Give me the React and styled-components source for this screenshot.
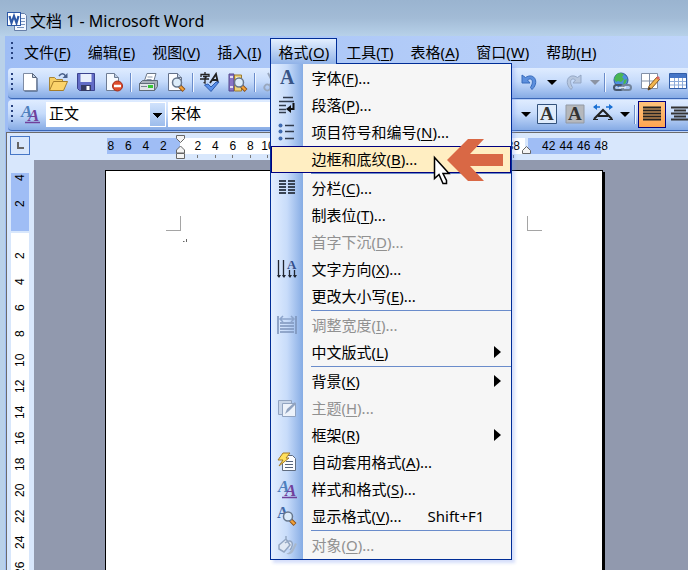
import React from "react";
import styled, { createGlobalStyle, css } from "styled-components";

const GlobalStyle = createGlobalStyle`
    * {
        box-sizing: border-box;
    }
    body {
        margin: 0;
        overflow: hidden;
        font-family: "Noto Sans", "Noto Sans CJK SC", sans-serif;
        font-size: 15px;
        color: #000;
    }
    button, select {
        font: inherit;
        color: inherit;
        border: 0;
        padding: 0;
        margin: 0;
        background: none;
    }
    svg {
        display: block;
        flex: none;
        overflow: visible;
    }
`;

const Window = styled.div`
    display: flex;
    flex-direction: column;
    height: 100vh;
    overflow: hidden;
    background: #b9d1e9;
`;

const TitleBar = styled.header`
    display: flex;
    align-items: center;
    gap: 3px;
    flex: none;
    height: 36px;
    padding: 6px 7px 0;
    background: linear-gradient(#9ab4d0, #a2bbd6 50%, #b7d1e9);
`;

const Title = styled.h1`
    margin: 0;
    font-size: 16px;
    font-weight: 400;
    line-height: 28px;
`;

const Frame = styled.div`
    display: flex;
    flex-direction: column;
    flex: 1;
    min-height: 0;
    margin-left: 5px;
    background: linear-gradient(90deg, #9ebdf5, #bfd5fa);
`;

const MenuBar = styled.nav`
    display: flex;
    align-items: flex-start;
    flex: none;
    height: 32px;
    padding: 2px 0 0 3px;
`;

const Grip = styled.span`
    flex: none;
    width: 2px;
    height: 18px;
    margin: ${props => props.$top || 0}px 3px 0;
    background: repeating-linear-gradient(#27417f 0 2px, transparent 2px 5px);
`;

const MenuSlot = styled.div`
    position: relative;
    z-index: ${props => (props.$open ? 10 : 1)};
    margin-right: 1px;
`;

const MenuButton = styled.button`
    position: relative;
    z-index: 2;
    display: block;
    height: 26px;
    padding: 0 7px;
    border: 1px solid transparent;
    border-bottom: 0;
    line-height: 24px;
    white-space: nowrap;
    ${props =>
        props.$open &&
        css`
            border-color: #002d96;
            background: linear-gradient(#e3efff, #91b3e8);
        `}
`;

const Mnemonic = styled.u`
    text-underline-offset: 2px;
    text-decoration-thickness: 1px;
`;

const Menu = styled.ul`
    position: absolute;
    top: 25px;
    left: 0;
    width: 242px;
    margin: 0;
    padding: 1px 0 0;
    list-style: none;
    border: 1px solid #002d96;
    background: linear-gradient(90deg, #e3efff, #c8dcfa 50%, #86ace4) no-repeat 0 0 / 32px 100% #f6f6f6;
    box-shadow: 3px 3px 3px rgba(120, 150, 240, 0.3);
`;

const MenuLine = styled.li`
    position: relative;
`;

const Divider = styled.li`
    height: 2px;
    margin-left: 40px;
    border-top: 1px solid #6a8ccb;
`;

const MenuItem = styled.button`
    display: flex;
    align-items: center;
    width: 100%;
    height: 27px;
    padding: 0 10px 1px 0;
    text-align: left;
    line-height: 24px;
    white-space: nowrap;
    color: ${props => (props.disabled ? "#919191" : "#000")};
    ${props =>
        props.$active &&
        css`
            background: #ffeec2;
            box-shadow: inset 0 0 0 1px #000080;
        `}
`;

const IconCell = styled.span`
    display: flex;
    justify-content: center;
    flex: none;
    width: 32px;
    margin-right: 8px;
`;

const Shortcut = styled.span`
    margin-left: auto;
    padding-right: 17px;
`;

const Submenu = styled.span`
    margin-left: auto;
    border: 6px solid transparent;
    border-left: 7px solid #000;
    border-right: 0;
`;

const Pointer = styled.svg`
    position: absolute;
    z-index: 3;
    left: 162px;
    top: -8px;
    pointer-events: none;
`;

const Toolbar = styled.div`
    display: flex;
    align-items: center;
    flex: none;
    height: 31px;
    margin: 0 0 1px 3px;
    padding-bottom: 2px;
    overflow: hidden;
    border-bottom: 1px solid #3b67b6;
    border-radius: 4px 0 0 4px;
    background: linear-gradient(#dfecff, #c6dbfb 45%, #86abe5);
`;

const ToolGroup = styled.div`
    display: flex;
    align-items: center;
    flex: none;
    width: ${props => (props.$width ? `${props.$width}px` : "auto")};
    overflow: hidden;
`;

const Tool = styled.button`
    display: flex;
    align-items: center;
    justify-content: center;
    flex: none;
    width: 28px;
    height: 27px;
    ${props =>
        props.$active &&
        css`
            border: 1px solid #000080;
            background: linear-gradient(#ffc37b, #ffa552);
        `}
`;

const DropButton = styled.button`
    display: flex;
    align-items: center;
    justify-content: center;
    flex: none;
    width: 15px;
    height: 27px;
    &::after {
        content: "";
        border: 5px solid transparent;
        border-top-color: ${props => (props.disabled ? "#8b93a3" : "#000")};
        border-bottom: 0;
    }
`;

const Rule = styled.span`
    flex: none;
    width: 2px;
    height: 19px;
    margin: 0 2px;
    border-left: 1px solid #6a8ccb;
    border-right: 1px solid #f1f7ff;
`;

const Combo = styled.label`
    display: flex;
    flex: none;
    width: ${props => props.$width}px;
    height: 25px;
    margin-left: 2px;
    padding-right: 1px;
    align-items: center;
    background: #fff;
    &::after {
        content: "";
        flex: none;
        width: 15px;
        height: 23px;
        background:
            linear-gradient(#000, #000) no-repeat 3px 10px / 9px 1px,
            linear-gradient(#000, #000) no-repeat 4px 11px / 7px 1px,
            linear-gradient(#000, #000) no-repeat 5px 12px / 5px 1px,
            linear-gradient(#000, #000) no-repeat 6px 13px / 3px 1px,
            linear-gradient(#000, #000) no-repeat 7px 14px / 1px 1px,
            linear-gradient(#d0e2fc, #9dbdec);
    }
`;

const Select = styled.select`
    flex: 1;
    min-width: 0;
    height: 25px;
    padding: 0 0 2px 3px;
    appearance: none;
    line-height: 23px;
`;

const Workspace = styled.div`
    display: flex;
    flex-direction: column;
    flex: 1;
    min-height: 0;
    margin-left: 1px;
    border-top: 1px solid #6b6b6b;
    border-left: 1px solid #6b6b6b;
    background: #d8e7fc;
    font-family: "Liberation Sans", sans-serif;
    font-size: 12px;
    line-height: 16px;
`;

const TopRuler = styled.div`
    display: flex;
    position: relative;
    flex: none;
    height: 27px;
    padding: 3px 0 0 3px;
`;

const TabBox = styled.button`
    display: flex;
    align-items: center;
    justify-content: center;
    width: 20px;
    height: 19px;
    margin-right: 77px;
    border: 1px solid #4677c6;
`;

const Scale = styled.div`
    display: flex;
    flex: none;
    width: ${props => props.$width}px;
    height: 16px;
    margin-top: 2px;
    margin-right: ${props => props.$after || 0}px;
    background: ${props => (props.$outer ? "#9fbdf5" : "#fff")};
`;

const Marks = styled.div`
    display: flex;
    flex: 1;
    margin: ${props => props.$inset};
`;

const Mark = styled.span`
    display: flex;
    flex: 1 0 0;
    justify-content: center;
    width: 0;
    height: 20px;
    background: ${props => (props.$tick ? "linear-gradient(#777, #777) no-repeat 50% 100% / 1px 3px" : "none")};
`;

const Indent = styled.svg`
    position: absolute;
    left: ${props => props.$left}px;
    top: ${props => props.$top}px;
`;

const Desk = styled.div`
    display: flex;
    flex: 1;
    min-height: 0;
`;

const SideRuler = styled.div`
    display: flex;
    flex-direction: column;
    flex: none;
    width: 27px;
    padding: 13px 5px 0 4px;
    overflow: hidden;
`;

const SideScale = styled.div`
    flex: none;
    width: 18px;
    height: ${props => (props.$outer ? "58px" : "auto")};
    margin-bottom: 2px;
    padding-top: ${props => (props.$outer ? 0 : 10)}px;
    background: ${props => (props.$outer ? "#9fbdf5" : "#fff")};
`;

const SideMark = styled.span`
    display: flex;
    align-items: center;
    justify-content: center;
    width: 18px;
    height: 26px;
    writing-mode: vertical-rl;
    rotate: 180deg;
    ${SideScale} > &:first-child {
        margin-top: ${props => (props.$first ? -8 : 0)}px;
    }
`;

const Canvas = styled.main`
    flex: 1;
    min-width: 0;
    padding: 10px 0 0 71px;
    overflow: hidden;
    background: #9199ae;
`;

const Page = styled.article`
    display: flex;
    justify-content: space-between;
    width: 498px;
    height: 704px;
    padding: 45px 60px 0;
    border: 1px solid #000;
    background: #fff;
    box-shadow: 2px 2px 0 #000;
`;

const Corner = styled.span`
    width: 15px;
    height: 15px;
    border-bottom: 1px solid #a5a5a5;
    border-${props => props.$side}: 1px solid #a5a5a5;
`;

const Paragraph = styled.p`
    flex: 1;
    margin: 23px 0 0 2px;
`;

const Letter = ({ x, y, size = 18, fill, italic }) => (
    <text
        x={x}
        y={y}
        fontSize={size}
        fill={fill}
        fontFamily="Liberation Serif, serif"
        fontWeight="700"
        fontStyle={italic ? "italic" : "normal"}
    >
        A
    </text>
);

const Icon = ({ children, size = 20 }) => (
    <svg width={size} height={size} viewBox={`0 0 ${size} ${size}`} aria-hidden="true">
        {children}
    </svg>
);

const Lens = () => (
    <>
        <path d="M13.5 14l4.5 4.5" stroke="#8a4f19" strokeWidth="4" />
        <path d="M13.5 14l4 4" stroke="#f3a238" strokeWidth="2.4" />
        <circle cx="11" cy="10.500" r="4.500" fill="#dcecfa" stroke="#67778d" strokeWidth="1.500" />
    </>
);

const icons = {
    word: (
        <>
            <path d="M7.500 2.500h10l2 2v15h-12z" fill="#f4f8ff" stroke="#667fa8" />
            <path d="M14 7.500h4M14 10.500h4M14 13.500h4M10 16.500h7" stroke="#7893bd" />
            <rect x=".5" y="1.500" width="13" height="13" fill="#fff" stroke="#2d58a6" />
            <path d="M2.500 5l2 7L7 5l2.500 7 2-7" fill="none" stroke="#2d58a6" strokeWidth="2.200" />
        </>
    ),
    blank: (
        <>
            <path d="M4.500 2.500h9l4 4v13h-13z" fill="#35465f" />
            <path d="M3.500 1.500h9l4 4v13h-13z" fill="#fff" stroke="#7e8ba3" />
            <path d="M12.500 1.500v4h4z" fill="#c4d3e8" stroke="#5b687d" />
        </>
    ),
    open: (
        <>
            <path d="M1.500 18V5.500h5l2 2h6V11" fill="#f6ce64" stroke="#a88537" />
            <path d="M1.500 18.500l4-9h14l-4 9z" fill="#fbd36b" stroke="#a67d29" />
            <path d="M11 4c2-3 5-3 6.500 0" fill="none" stroke="#485f89" strokeWidth="1.500" />
            <path d="M19.500 1v5h-5z" fill="#485f89" />
        </>
    ),
    save: (
        <>
            <path d="M1.500 1.500h17v17h-15l-2-2z" fill="#626cc6" stroke="#3c438f" />
            <path d="M4.500 2h11v8h-11z" fill="#e9effc" />
            <path d="M5 13h10v6H5z" fill="#363b65" />
            <path d="M10.500 14h3v4h-3z" fill="#fff" />
        </>
    ),
    permission: (
        <>
            <path d="M2.500 1.500h8l4 4v13h-12z" fill="#f6faff" stroke="#6e7c94" />
            <path d="M10.500 1.500v4h4" fill="#bccce2" stroke="#6e7c94" />
            <circle cx="13.500" cy="14" r="5" fill="#df4d2d" stroke="#a32c18" />
            <path d="M10 14h7" stroke="#fff" strokeWidth="2.500" />
        </>
    ),
    print: (
        <>
            <path d="M6 10l3-8.500h9L15.500 10z" fill="#fff" stroke="#6c7889" />
            <path d="M9.500 5h5M8.500 7.500h5" stroke="#8997ab" />
            <path d="M1.500 11.500l3-3h15v6l-3 4h-15z" fill="#a9b1bc" stroke="#606b79" />
            <path d="M1.500 11.500h15v7h-15z" fill="#dfe3e8" stroke="#606b79" />
            <path d="M10 13h5v3h-5z" fill="#36c633" />
            <path d="M3 14.500h6" stroke="#7a8592" />
        </>
    ),
    preview: (
        <>
            <path d="M2.500 1.500h9l4 4v13h-13z" fill="#fbfcff" stroke="#64718a" />
            <path d="M11.500 1.500v4h4" fill="#c4d3e8" stroke="#64718a" />
            <Lens />
        </>
    ),
    spelling: (
        <>
            <path d="M5 0v2M1 5V2.500h8V5M3 4.500h4L5 6v5l-1.500-.5M0 7h9" fill="none" stroke="#222" strokeWidth="1.300" />
            <path d="M10 11l6-9 2 9M12 8h6" fill="none" stroke="#222" strokeWidth="1.800" />
            <path d="M4.500 13l3.500-1 3 3 5-5h3l-8 9.500z" fill="#5a91eb" stroke="#2d5aac" />
        </>
    ),
    research: (
        <>
            <path d="M1 2h5v17H1z" fill="#8875c6" stroke="#53478a" />
            <path d="M6.500 3h7v16h-7z" fill="#ecd37b" stroke="#9f7a2c" />
            <path d="M2 5h3M2 15h3M8 6h3" stroke="#fff" strokeWidth="1.500" />
            <Lens />
        </>
    ),
    cut: (
        <path d="M6 1l6 12M14 1L8 13M7 13a3 3 0 1 0 0 5 3 3 0 0 0 0-5M13 13a3 3 0 1 0 0 5 3 3 0 0 0 0-5" fill="none" stroke="#99a7bd" strokeWidth="1.800" />
    ),
    undo: (
        <path d="M2 3v8h8L7.500 8c4-3 7 1 3 7.500l1.500 2C20 10 14 0 5.500 5.500z" fill="#5c8fdd" stroke="#376bbb" strokeLinejoin="round" />
    ),
    redo: (
        <path d="M18 3v8h-8l2.500-3c-4-3-7 1-3 7.500l-1.500 2C0 10 6 0 14.500 5.500z" fill="#b7c7df" stroke="#94a7c5" strokeLinejoin="round" />
    ),
    link: (
        <>
            <circle cx="9" cy="8" r="7" fill="#4c8de0" stroke="#315c9d" />
            <path d="M4 3c3-3 6-2 8-.5L10 5l2 2-3 3-3-1-2 1-2-3zM12 8l3-1-1 4-3 2z" fill="#48b554" />
            <rect x="2" y="13" width="9" height="5" rx="2.500" fill="none" stroke="#47576d" strokeWidth="2" />
            <rect x="10" y="13" width="9" height="5" rx="2.500" fill="none" stroke="#71839b" strokeWidth="2" />
            <path d="M7 15.500h7" stroke="#dfe7f0" strokeWidth="1.500" />
        </>
    ),
    borders: (
        <>
            <path d="M1.500 1.500h16v15h-16z" fill="#fff" stroke="#8290a7" />
            <path d="M9.500 2v14M2 9h15" stroke="#8290a7" />
            <path d="M8 18l1-4 8-9 2.500 2.500-8 9z" fill="#f2b64e" stroke="#875721" />
            <path d="M8 18l1-3 2 1.500z" fill="#333" />
            <path d="M16 6l2-2 2 2-2 2z" fill="#dc6461" />
        </>
    ),
    table: (
        <>
            <path d="M1.500 1.500h17v15h-17z" fill="#fff" stroke="#315da8" />
            <path d="M2 2h16v4H2z" fill="#4475c7" />
            <path d="M6.500 6v10M10.500 6v10M14.500 6v10M2 9.500h16M2 13h16" stroke="#8dabd9" />
        </>
    ),
    styles: (
        <>
            <Letter x="1" y="13" size="17" fill="#4d80bd" italic />
            <Letter x="8" y="17" size="17" fill="#70409b" italic />
            <path d="M5 18.500h15" stroke="#70409b" strokeWidth="1.500" />
        </>
    ),
    boxedA: (
        <>
            <path d="M.5.5h19v19H.5z" fill="#dfebfb" stroke="#33527c" />
            <Letter x="3" y="16" size="19" fill="#333" />
        </>
    ),
    shadedA: (
        <>
            <path d="M1 1h18v18H1z" fill="#b5b8bd" stroke="#9299a4" />
            <Letter x="3" y="16" size="19" fill="#333" />
        </>
    ),
    scaleA: (
        <>
            <path d="M1 3h6M13 3h6" fill="none" stroke="#196fd3" strokeWidth="1.500" />
            <path d="M4 0v6L0 3zM16 0v6l4-3z" fill="#196fd3" />
            <path d="M1 15L10 6l9 9M5 12h10" fill="none" stroke="#222" strokeWidth="2" />
            <path d="M0 15.500h5M15 15.500h5" stroke="#222" />
        </>
    ),
    justify: <path d="M1 3.500h18M1 6.500h18M1 9.500h18M1 12.500h18M1 15.500h18" stroke="#222" strokeWidth="2" />,
    center: <path d="M1 3.500h18M4 6.500h12M1 9.500h18M4 12.500h12M1 15.500h18" stroke="#333" strokeWidth="2" />,
    font: <Letter x="3" y="16" size="20" fill="#375486" />,
    paragraph: (
        <>
            <path d="M6 2.500h10M2 6.500h15M2 10.500h7M2 14.500h7M2 17.500h7" stroke="#303b4c" strokeWidth="1.500" />
            <path d="M16.500 8v6H13" fill="none" stroke="#111" strokeWidth="2" />
            <path d="M9 14l5-4v8z" fill="#111" />
        </>
    ),
    bullets: (
        <>
            <path d="M8 3.500h9M8 9.500h9M8 16.500h9" stroke="#303b4c" strokeWidth="1.500" />
            <circle cx="3.500" cy="3.500" r="2" fill="#406bb0" />
            <circle cx="3.500" cy="9.500" r="2" fill="#406bb0" />
            <circle cx="3.500" cy="16.500" r="2" fill="#406bb0" />
        </>
    ),
    columns: (
        <path d="M2 3h7M11 3h7M2 6h7M11 6h7M2 9h7M11 9h7M2 12h7M11 12h7M2 15h7M11 15h7" stroke="#384353" strokeWidth="2" />
    ),
    direction: (
        <>
            <path d="M1.500 1v17M6.500 1v17M12.500 11v7M17.500 11v7" stroke="#20252f" strokeWidth="1.300" />
            <path d="M0 16h4l-2 3zM5 16h4l-2 3zM11 16h4l-2 3zM16 16h4l-2 3z" fill="#20252f" />
            <Letter x="10" y="10" size="13" fill="#344f8b" />
        </>
    ),
    width: (
        <>
            <path d="M1 1v18M19 1v18M3 8h14M3 11h14M3 14h14M3 17h14" stroke="#7e94ba" strokeWidth="1.600" />
            <path d="M3 4h14M6 1L3 4l3 3M14 1l3 3-3 3" fill="none" stroke="#8da5cc" strokeWidth="1.500" />
        </>
    ),
    theme: (
        <>
            <path d="M1.500 2.500h13v14h-13z" fill="#c8d5e8" stroke="#91a3c0" />
            <path d="M5.500 5.500h13v13h-13z" fill="#edf2fa" stroke="#91a3c0" />
            <path d="M8 16l2-5 8-7 1 2-7 7z" fill="#91a3c0" />
        </>
    ),
    autoformat: (
        <>
            <path d="M7.500 3.500h8l3 3v12h-13v-11z" fill="#fbfcff" stroke="#606c80" />
            <path d="M9 9.500h7M8 12.500h8M8 15.500h8" stroke="#56647b" />
            <path d="M6 1h7L9 6h3L2 14l4-6H1z" fill="#ffe05c" stroke="#a47a27" />
        </>
    ),
    reveal: (
        <>
            <Letter x="0" y="12" size="16" fill="#426ba9" />
            <Lens />
        </>
    ),
    object: (
        <>
            <path d="M2 10l7-6 4 6-6 7-5-3zM9 4V1M8 8c6-5 10 0 5 7" fill="#e1e9f4" stroke="#93a6c2" strokeWidth="1.500" />
            <path d="M9 18c3 1 4-2 6-4l3-6 2 1-3 6c-2 5-6 5-8 3z" fill="#a9b8cd" />
        </>
    )
};

const menus = [
    ["文件", "F"],
    ["编辑", "E"],
    ["视图", "V"],
    ["插入", "I"],
    ["格式", "O"],
    ["工具", "T"],
    ["表格", "A"],
    ["窗口", "W"],
    ["帮助", "H"]
];

const formatMenu = [
    { label: "字体", k: "F", icon: "font", more: true },
    { label: "段落", k: "P", icon: "paragraph", more: true },
    { label: "项目符号和编号", k: "N", icon: "bullets", more: true },
    { label: "边框和底纹", k: "B", more: true, active: true },
    null,
    { label: "分栏", k: "C", icon: "columns", more: true },
    { label: "制表位", k: "T", more: true },
    { label: "首字下沉", k: "D", more: true, disabled: true },
    { label: "文字方向", k: "X", icon: "direction", more: true },
    { label: "更改大小写", k: "E", more: true },
    null,
    { label: "调整宽度", k: "I", icon: "width", more: true, disabled: true },
    { label: "中文版式", k: "L", submenu: true },
    null,
    { label: "背景", k: "K", submenu: true },
    { label: "主题", k: "H", icon: "theme", more: true, disabled: true },
    { label: "框架", k: "R", submenu: true },
    { label: "自动套用格式", k: "A", icon: "autoformat", more: true },
    { label: "样式和格式", k: "S", icon: "styles", more: true },
    { label: "显示格式", k: "V", icon: "reveal", more: true, shortcut: "Shift+F1" },
    null,
    { label: "对象", k: "O", icon: "object", more: true, disabled: true }
];

const evens = (from, to) => Array.from({ length: (to - from) / 2 + 1 }, (_, i) => from + i * 2);

const Label = ({ text, k, more }) => (
    <span>
        {text}(<Mnemonic>{k}</Mnemonic>){more && "..."}
    </span>
);

const ToolButton = ({ name, title, active }) => (
    <Tool $active={active} aria-label={title}>
        <Icon>{icons[name]}</Icon>
    </Tool>
);

const FormatMenu = () => (
    <Menu>
        {formatMenu.map((item, i) =>
            item ? (
                <MenuLine key={item.label}>
                    <MenuItem disabled={item.disabled} $active={item.active}>
                        <IconCell>{item.icon && <Icon>{icons[item.icon]}</Icon>}</IconCell>
                        <Label text={item.label} k={item.k} more={item.more} />
                        {item.shortcut && <Shortcut>{item.shortcut}</Shortcut>}
                        {item.submenu && <Submenu />}
                    </MenuItem>
                    {item.active && (
                        <Pointer width="72" height="48" viewBox="0 0 72 48" aria-hidden="true">
                            <path d="M14 22L35 1h16L37 16h33v12H37l14 15H35z" fill="#d96845" />
                            <path
                                d="M1.500 19.500v21l4.500-4 4 9h3.500v-3l-3.500-7h6z"
                                fill="#fff"
                                stroke="#000"
                                strokeWidth="1.500"
                            />
                        </Pointer>
                    )}
                </MenuLine>
            ) : (
                <Divider key={i} role="separator" />
            )
        )}
    </Menu>
);

const App = () => (
    <>
        <GlobalStyle />
        <Window>
            <TitleBar>
                <Icon>{icons.word}</Icon>
                <Title>文档 1 - Microsoft Word</Title>
            </TitleBar>
            <Frame>
                <MenuBar>
                    <Grip $top={4} />
                    {menus.map(([text, k]) => (
                        <MenuSlot key={k} $open={k === "O"}>
                            <MenuButton $open={k === "O"}>
                                <Label text={text} k={k} />
                            </MenuButton>
                            {k === "O" && <FormatMenu />}
                        </MenuSlot>
                    ))}
                </MenuBar>
                <Toolbar>
                    <ToolGroup $width={508}>
                        <Grip />
                        <ToolButton name="blank" title="新建" />
                        <ToolButton name="open" title="打开" />
                        <ToolButton name="save" title="保存" />
                        <ToolButton name="permission" title="权限" />
                        <Rule />
                        <ToolButton name="print" title="打印" />
                        <ToolButton name="preview" title="打印预览" />
                        <Rule />
                        <ToolButton name="spelling" title="拼写和语法" />
                        <ToolButton name="research" title="信息检索" />
                        <Rule />
                        <ToolButton name="cut" title="剪切" />
                    </ToolGroup>
                    <ToolGroup>
                        <ToolButton name="undo" title="撤消" />
                        <DropButton aria-label="撤消列表" />
                        <ToolButton name="redo" title="恢复" />
                        <DropButton aria-label="恢复列表" disabled />
                        <Rule />
                        <ToolButton name="link" title="超链接" />
                        <ToolButton name="borders" title="表格和边框" />
                        <ToolButton name="table" title="插入表格" />
                    </ToolGroup>
                </Toolbar>
                <Toolbar>
                    <ToolGroup $width={510}>
                        <Grip />
                        <ToolButton name="styles" title="格式窗格" />
                        <Combo $width={120}>
                            <Select aria-label="样式">
                                <option>正文</option>
                            </Select>
                        </Combo>
                        <Combo $width={140}>
                            <Select aria-label="字体">
                                <option>宋体</option>
                            </Select>
                        </Combo>
                    </ToolGroup>
                    <ToolGroup>
                        <DropButton aria-label="下划线" />
                        <ToolButton name="boxedA" title="字符边框" />
                        <ToolButton name="shadedA" title="字符底纹" />
                        <ToolButton name="scaleA" title="字符缩放" />
                        <DropButton aria-label="缩放比例" />
                        <Rule />
                        <ToolButton name="justify" title="两端对齐" active />
                        <ToolButton name="center" title="居中" />
                    </ToolGroup>
                </Toolbar>
                <Workspace>
                    <TopRuler>
                        <TabBox aria-label="制表符">
                            <Icon size={8}>
                                <path d="M2 0v6h6" fill="none" stroke="#666" strokeWidth="2" />
                            </Icon>
                        </TabBox>
                        <Scale $width={73} $outer>
                            <Marks $inset="0 8px 0 -5px">
                                {[8, 6, 4, 2].map(n => (
                                    <Mark key={n}>{n}</Mark>
                                ))}
                            </Marks>
                        </Scale>
                        <Scale $width={345} $after={3}>
                            <Marks $inset="0 3px 0 9px">
                                {evens(2, 38).map(n => (
                                    <Mark key={n} $tick>
                                        {n}
                                    </Mark>
                                ))}
                            </Marks>
                        </Scale>
                        <Scale $width={73} $outer>
                            <Marks $inset="0 -9px 0 12px">
                                {evens(42, 48).map(n => (
                                    <Mark key={n}>{n}</Mark>
                                ))}
                            </Marks>
                        </Scale>
                        <Indent $left={169} $top={2} width="9" height="25" viewBox="0 0 9 25">
                            <path d="M.5.5h8v3l-4 4-4-4zM.5 18v-3l4-4 4 4v3zM.5 18.500h8v5h-8z" fill="#f4f4f4" stroke="#666" />
                        </Indent>
                        <Indent $left={515} $top={13} width="9" height="8" viewBox="0 0 9 8">
                            <path d="M.5 7.500v-3l4-4 4 4v3z" fill="#f4f4f4" stroke="#666" />
                        </Indent>
                    </TopRuler>
                    <Desk>
                        <SideRuler>
                            <SideScale $outer>
                                {[4, 2].map(n => (
                                    <SideMark key={n} $first={n === 4}>
                                        {n}
                                    </SideMark>
                                ))}
                            </SideScale>
                            <SideScale>
                                {evens(2, 30).map(n => (
                                    <SideMark key={n}>{n}</SideMark>
                                ))}
                            </SideScale>
                        </SideRuler>
                        <Canvas>
                            <Page>
                                <Corner $side="right" />
                                <Paragraph>
                                    <Icon size={4}>
                                        <path d="M3.500 0v3M0 2.500h1.500" stroke="#666" />
                                    </Icon>
                                </Paragraph>
                                <Corner $side="left" />
                            </Page>
                        </Canvas>
                    </Desk>
                </Workspace>
            </Frame>
        </Window>
    </>
);

export default App;
